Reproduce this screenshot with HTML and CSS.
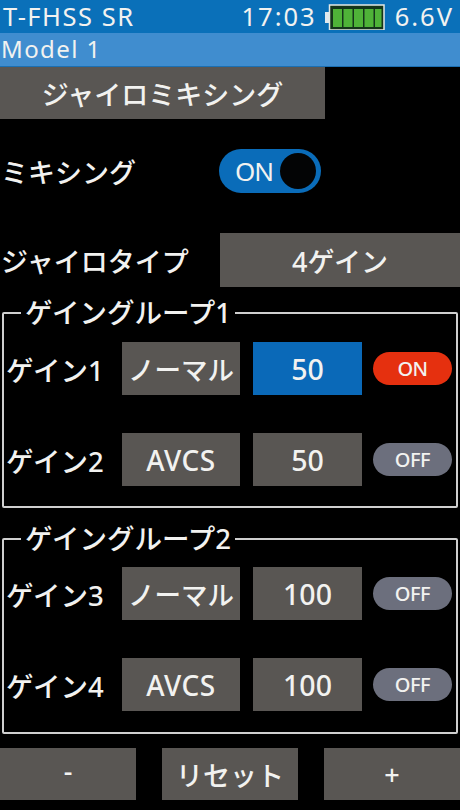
FILE: index.html
```html
<!DOCTYPE html>
<html lang="ja">
<head>
<meta charset="utf-8">
<title>ジャイロミキシング</title>
<link rel="stylesheet" href="styles.css">
</head>
<body>
<div class="screen">
  <header class="status">
    <span class="status-name">T-FHSS SR</span>
    <span class="status-time">17:03</span>
    <svg class="battery" width="60" height="26" viewBox="0 0 60 26" aria-hidden="true">
      <rect x="0" y="8" width="4" height="11" fill="#dfe8ee"/>
      <rect x="4.5" y="1" width="54.5" height="25" fill="#14351a" stroke="#e4e8e4" stroke-width="1.5"/>
      <rect x="8" y="5" width="9" height="18" fill="#4fb338"/>
      <rect x="18.5" y="5" width="9" height="18" fill="#4fb338"/>
      <rect x="29" y="5" width="9" height="18" fill="#4fb338"/>
      <rect x="39.5" y="5" width="9" height="18" fill="#4fb338"/>
      <rect x="50" y="5" width="6.5" height="18" fill="#4fb338"/>
    </svg>
    <span class="status-volt">6.6V</span>
  </header>
  <div class="model">Model 1</div>
  <h1 class="title btn">ジャイロミキシング</h1>

  <div class="row-mix">
    <span class="label">ミキシング</span>
    <div class="toggle"><span class="toggle-text">ON</span><span class="toggle-knob"></span></div>
  </div>

  <div class="row-type">
    <span class="label">ジャイロタイプ</span>
    <div class="btn type-btn">4ゲイン</div>
  </div>

  <fieldset class="group">
    <legend>ゲイングループ1</legend>
    <div class="gain">
      <span class="gain-label">ゲイン1</span>
      <div class="btn mode">ノーマル</div>
      <div class="btn value active">50</div>
      <div class="pill on">ON</div>
    </div>
    <div class="gain">
      <span class="gain-label">ゲイン2</span>
      <div class="btn mode latin">AVCS</div>
      <div class="btn value">50</div>
      <div class="pill">OFF</div>
    </div>
  </fieldset>

  <fieldset class="group group-second">
    <legend>ゲイングループ2</legend>
    <div class="gain">
      <span class="gain-label">ゲイン3</span>
      <div class="btn mode">ノーマル</div>
      <div class="btn value">100</div>
      <div class="pill">OFF</div>
    </div>
    <div class="gain">
      <span class="gain-label">ゲイン4</span>
      <div class="btn mode latin">AVCS</div>
      <div class="btn value">100</div>
      <div class="pill">OFF</div>
    </div>
  </fieldset>

  <footer class="actions">
    <div class="btn action minus">-</div>
    <div class="btn action">リセット</div>
    <div class="btn action">+</div>
  </footer>
</div>
</body>
</html>
```
FILE: styles.css
```css
* { box-sizing: border-box; }
html, body { margin: 0; padding: 0; background: #000; }
body {
  font-family: "Noto Sans", "Noto Sans CJK JP", sans-serif;
  color: #f2f2f0;
}
.screen { width: 460px; height: 810px; overflow: hidden; display: flex; flex-direction: column; }

.status {
  height: 33px; background: #0a70b9; display: flex; align-items: center;
  padding: 0 6px 0 3px; font-size: 25.5px; line-height: 33px; letter-spacing: 2px;
}
.status-name { flex: 1; letter-spacing: 1.5px; }
.status-time { margin-right: 8px; }
.battery { margin-right: 10px; flex: none; }

.model {
  height: 34px; background: #408dcf; border-bottom: 1px solid #1b6fb2;
  font-size: 24px; line-height: 31px; padding-left: 1px; letter-spacing: 1.4px;
}

.btn {
  background: #595653; display: flex; align-items: center; justify-content: center;
  font-weight: 500; margin: 0; white-space: nowrap;
}

.title { width: 325px; height: 52px; font-size: 27px; flex: none; }

.label { font-size: 27px; padding-left: 1px; white-space: nowrap; font-weight: 500; }

.row-mix { display: flex; align-items: center; margin-top: 30px; height: 44px; }
.row-mix .label { width: 219px; }
.toggle {
  width: 102px; height: 44px; border-radius: 22px; background: #0a6cb9;
  display: flex; align-items: center; justify-content: space-between; padding: 0 5px 0 16px;
}
.toggle-text { font-size: 26px; letter-spacing: -1px; }
.toggle-knob { width: 36px; height: 36px; border-radius: 50%; background: #030405; }

.row-type { display: flex; align-items: center; margin-top: 40px; height: 54px; }
.row-type .label { width: 220px; }
.type-btn { flex: 1; height: 54px; font-size: 27px; }

.group {
  margin: 11px 2px 0; padding: 14px 0 0 2px; height: 210px; min-width: 0;
  border: 2px solid #cfcfcf; border-radius: 2px;
}
.group-second { margin-top: 16px; padding-top: 13px; }
.group legend { padding: 0 4px; margin-left: 15px; font-size: 27.5px; line-height: 30px; font-weight: 500; }

.gain { display: flex; align-items: center; height: 53px; }
.gain + .gain { margin-top: 38px; }
.gain-label { width: 116px; font-size: 27.5px; white-space: nowrap; font-weight: 500; }
.mode { width: 118px; height: 53px; font-size: 26.5px; }
.mode.latin { font-size: 28px; letter-spacing: 0.6px; }
.value { width: 109px; height: 53px; margin-left: 13px; font-size: 28.5px; }
.value.active { background: #0a69b8; }
.pill {
  width: 79px; height: 33px; margin-left: 11px; border-radius: 17px;
  background: #6c6f7d; display: flex; align-items: center; justify-content: center;
  font-size: 20px; font-weight: 500; letter-spacing: -0.5px;
}
.pill.on { background: #e5300f; }

.actions { display: flex; justify-content: space-between; margin-top: 14px; }
.action { width: 136px; height: 52px; font-size: 27px; }
.minus { padding-bottom: 8px; }
```
